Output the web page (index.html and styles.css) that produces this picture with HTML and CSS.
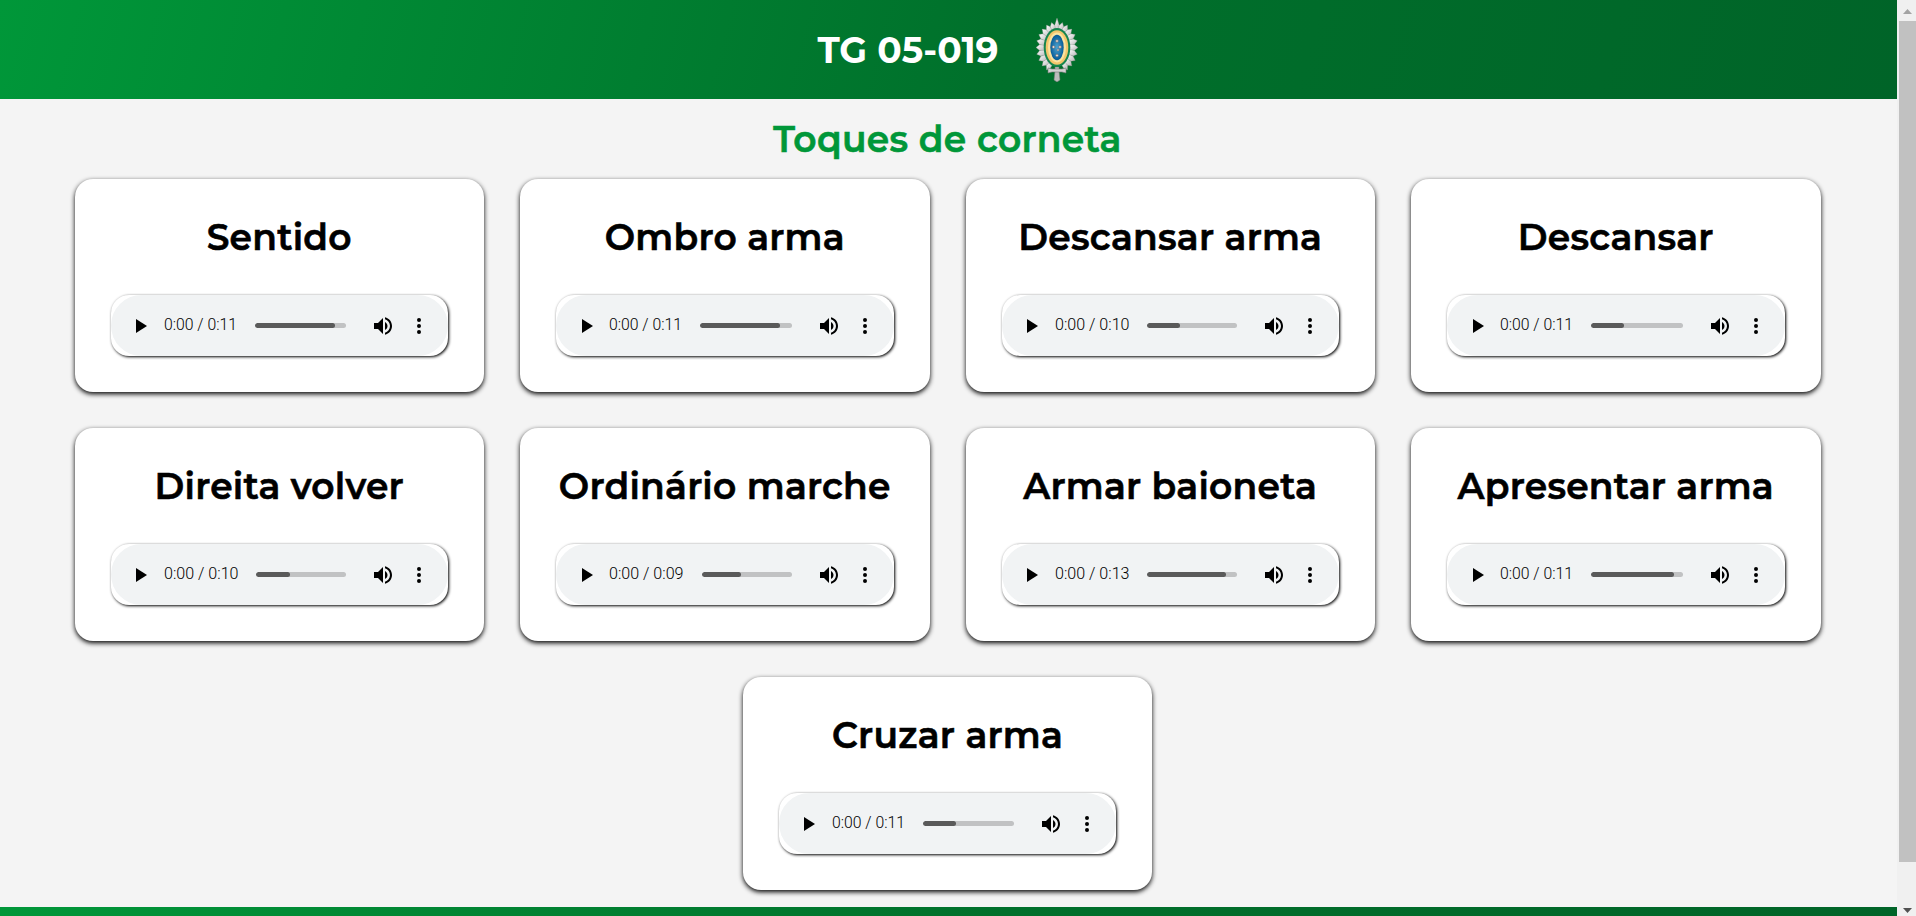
FILE: index.html
```
<!DOCTYPE html>
<html lang="pt-BR">
<head>
<meta charset="utf-8">
<title>TG 05-019</title>
<link rel="stylesheet" href="styles.css">
</head>
<body>
<svg class="defs" aria-hidden="true">
  <symbol id="play" viewBox="0 0 24 24"><path d="M8 5v14l11-7z"/></symbol>
  <symbol id="volume" viewBox="0 0 24 24"><path d="M3 9v6h4l5 5V4L7 9H3zm13.5 3c0-1.770-1.020-3.290-2.500-4.030v8.050c1.480-.73 2.500-2.250 2.500-4.020zM14 3.230v2.060c2.890.86 5 3.540 5 6.710s-2.110 5.850-5 6.710v2.060c4.010-.91 7-4.490 7-8.770s-2.990-7.860-7-8.770z"/></symbol>
  <symbol id="more" viewBox="0 0 24 24"><path d="M12 8a2 2 0 1 0 0-4 2 2 0 0 0 0 4zm0 2a2 2 0 1 0 0 4 2 2 0 0 0 0-4zm0 6a2 2 0 1 0 0 4 2 2 0 0 0 0-4z"/></symbol>
</svg>
<div class="window">
  <div class="page">
    <header class="header">
      <h1 class="brand">TG 05-019</h1>
      <svg class="crest" viewBox="0 0 42 64">
        <defs>
          <linearGradient id="silver" x1="0" y1="0" x2="1" y2="1"><stop offset="0" stop-color="#fff"/><stop offset=".5" stop-color="#dcdcdc"/><stop offset="1" stop-color="#b4b4b4"/></linearGradient>
          <radialGradient id="blue"><stop offset="0" stop-color="#4da3d0"/><stop offset="1" stop-color="#075b97"/></radialGradient>
        </defs>
        <g id="rays"></g>
        <path d="M19 49h4v4l1 9-3 2-3-2 1-9z" fill="#bcbcbc" stroke="#777" stroke-width=".5"/>
        <path d="M12 50l4 1h10l4-1v5l-4-1H16l-4 1z" fill="#d2d2d2" stroke="#777" stroke-width=".6"/>
        <ellipse cx="21" cy="29.500" rx="13.300" ry="19.500" fill="#16854f"/>
        <ellipse cx="21" cy="29.500" rx="11.300" ry="17.300" fill="#f3c66c"/>
        <ellipse cx="21" cy="29.500" rx="9" ry="15" fill="#fbe3a0"/>
        <ellipse cx="21" cy="29.500" rx="6.700" ry="12.700" fill="url(#blue)"/>
        <g fill="#e8e4e0" stroke="#775f5c" stroke-width=".5"><circle cx="21" cy="23" r="1.300"/><circle cx="17.500" cy="29" r="1.300"/><circle cx="24" cy="29" r="1.300"/><circle cx="22" cy="32" r="1"/><circle cx="21" cy="37.500" r="1.300"/></g>
      </svg>
    </header>
    <main class="main">
      <h2 class="title">Toques de corneta</h2>
      <section class="cards" id="cards"></section>
    </main>
    <footer class="footer"></footer>
  </div>
  <div class="scrollbar">
    <svg class="arrow" viewBox="0 0 17 21"><path d="M4 14h9L8.500 9z" fill="#a3a3a3"/></svg>
    <div class="thumb"></div>
    <svg class="arrow down" viewBox="0 0 17 21"><path d="M4 13h9L8.500 18z" fill="#505050"/></svg>
  </div>
</div>
<script src="app.js"></script>
</body>
</html>
```
FILE: styles.css
```
* { box-sizing: border-box; }
body { margin: 0; overflow: hidden; font-family: Montserrat, Inter, sans-serif; }
.defs { position: absolute; width: 0; height: 0; }
.window { display: flex; width: 100vw; height: 916px; overflow: hidden; }
.page { flex: 1; display: flex; flex-direction: column; background: #f4f4f4; }
.header { height: 99px; display: flex; justify-content: center; gap: 37px; padding: 18px 2px 0 0; background: linear-gradient(105deg, #009739, #00702b 53%, #006428); }
.brand, .title, .name { margin: 0; font-size: 36px; line-height: 44px; white-space: nowrap; }
.brand { padding-top: 10px; font-weight: 700; color: #fff; }
.title, .name { font-weight: 600; text-align: center; letter-spacing: .27px; -webkit-text-stroke: .6px currentColor; }
.crest { width: 42px; height: 64px; }
.main { height: 808px; display: flex; flex-direction: column; }
.title { height: 80px; padding: 18px 2px 0 0; letter-spacing: .36px; color: #009739; }
.cards { display: flex; flex-wrap: wrap; justify-content: center; align-content: flex-start; gap: 36px; padding: 0 76px 0 74px; }
.card { width: 409.500px; height: 213px; padding: 36px; display: flex; flex-direction: column; justify-content: space-between; border-radius: 18px; background: #fff; box-shadow: 0 2px 5px #000; }
.name { margin: 0 -20px; color: #000; }
.player { height: 61px; border-radius: 18px; background: #fff; box-shadow: 1px 1px 3px #000; }
.pill { height: 100%; display: flex; align-items: center; padding: 0 17px 0 17.500px; border-radius: 30.500px; background: #f1f3f4; }
.icon { width: 24px; height: 24px; flex: none; }
.time { display: block; overflow: visible; margin: -3px 0 0 11.500px; flex: none; font-family: Roboto, "Liberation Sans", sans-serif; font-weight: 300; font-size: 17px; fill: #000; }
.track { flex: 1; height: 5px; margin: 0 25px 0 18px; border-radius: 3px; background: #c1c2c3; overflow: hidden; }
.buffer { height: 100%; border-radius: 3px; background: #5a5a5a; }
.more { margin-left: 12px; }
.footer { height: 9px; background: linear-gradient(100deg, #009739, #00702b 53%, #006428); }
.scrollbar { width: 19px; padding-left: 2px; display: flex; flex-direction: column; background: #f0f0f0; }
.arrow { width: 17px; height: 21px; flex: none; }
.thumb { height: 841px; background: #c1c1c1; }
.down { margin-top: auto; }
```
FILE: app.js
```
// name, clip length, buffered share of the track
const calls = [
  ["Sentido", "0:11", 88],
  ["Ombro arma", "0:11", 87],
  ["Descansar arma", "0:10", 37],
  ["Descansar", "0:11", 36],
  ["Direita volver", "0:10", 38],
  ["Ordinário marche", "0:09", 44],
  ["Armar baioneta", "0:13", 88],
  ["Apresentar arma", "0:11", 91],
  ["Cruzar arma", "0:11", 36]
];

document.getElementById("cards").innerHTML = calls.map(([name, length, buffered]) => {
  const timeWidth = length === "0:11" ? 73 : 74.5;
  return `
  <article class="card">
    <h2 class="name">${name}</h2>
    <div class="player"><div class="pill">
      <svg class="icon"><use href="#play"/></svg>
      <svg class="time" width="${timeWidth}" height="24"><text x="0" y="18" textLength="${timeWidth}" lengthAdjust="spacingAndGlyphs">0:00 / ${length}</text></svg>
      <div class="track"><div class="buffer" style="width:${buffered}%"></div></div>
      <svg class="icon"><use href="#volume"/></svg>
      <svg class="icon more"><use href="#more"/></svg>
    </div></div>
  </article>`;
}).join("");

// silver leaves round the crest
let rays = "";
for (let i = 0; i < 24; i++) {
  const a = i / 24 * 2 * Math.PI;
  if (Math.abs(i - 12) < 2) continue;
  const point = (t, rx, ry) => `${(21 + rx * Math.sin(t)).toFixed(2)},${(29.5 - ry * Math.cos(t)).toFixed(2)}`;
  const tip = i === 0 ? 29.5 : 26;
  rays += `<polygon points="${point(a - .16, 12, 18)} ${point(a - .13, 17.5, 22.5)} ${point(a, 21, tip)} ${point(a + .13, 17.5, 22.5)} ${point(a + .16, 12, 18)}" fill="url(#silver)" stroke="#8b8b8b" stroke-width=".3"/>`;
}
document.getElementById("rays").innerHTML = rays;
```
